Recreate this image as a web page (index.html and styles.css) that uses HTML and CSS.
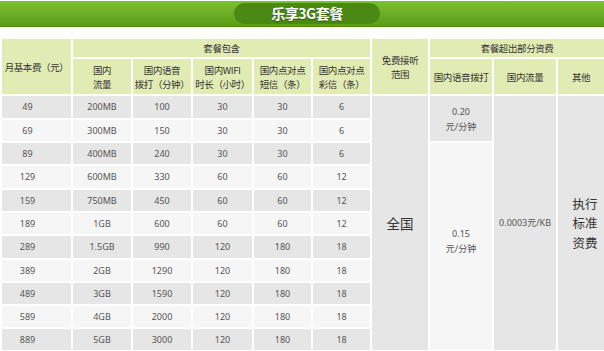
FILE: index.html
```html
<!DOCTYPE html>
<html lang="zh">
<head>
<meta charset="utf-8">
<title>乐享3G套餐</title>
<link rel="stylesheet" href="styles.css">
</head>
<body>
<div class="band">
  <div class="pill">乐享3G套餐</div>
</div>
<table class="plan">
  <colgroup>
    <col class="c1"><col class="c2"><col class="c3"><col class="c4"><col class="c5"><col class="c6"><col class="c7"><col class="c8"><col class="c9"><col class="c10">
  </colgroup>
  <thead>
    <tr class="h1">
      <th rowspan="2">月基本费（元）</th>
      <th colspan="5">套餐包含</th>
      <th rowspan="2" class="free">免费接听<br>范围</th>
      <th colspan="3">套餐超出部分资费</th>
    </tr>
    <tr class="h2">
      <th>国内<br>流量</th>
      <th>国内语音<br>拨打（分钟）</th>
      <th>国内WIFI<br>时长（小时）</th>
      <th>国内点对点<br>短信（条）</th>
      <th>国内点对点<br>彩信（条）</th>
      <th>国内语音拨打</th>
      <th>国内流量</th>
      <th>其他</th>
    </tr>
  </thead>
  <tbody>
    <tr class="dark r24">
      <td class="fee">49</td><td>200MB</td><td>100</td><td>30</td><td>30</td><td>6</td>
      <td rowspan="11" class="big">全国</td>
      <td rowspan="2" class="rate">0.20<br>元/分钟</td>
      <td rowspan="11" class="grey">0.0003元/KB</td>
      <td rowspan="11" class="other">执行<br>标准<br>资费</td>
    </tr>
    <tr class="light">
      <td class="fee">69</td><td>300MB</td><td>150</td><td>30</td><td>30</td><td>6</td>
    </tr>
    <tr class="dark">
      <td class="fee">89</td><td>400MB</td><td>240</td><td>30</td><td>30</td><td>6</td>
      <td rowspan="9" class="rate2">0.15<br>元/分钟</td>
    </tr>
    <tr class="light r24">
      <td class="fee">129</td><td>600MB</td><td>330</td><td>60</td><td>60</td><td>12</td>
    </tr>
    <tr class="dark">
      <td class="fee">159</td><td>750MB</td><td>450</td><td>60</td><td>60</td><td>12</td>
    </tr>
    <tr class="light">
      <td class="fee">189</td><td>1GB</td><td>600</td><td>60</td><td>60</td><td>12</td>
    </tr>
    <tr class="dark r24">
      <td class="fee">289</td><td>1.5GB</td><td>990</td><td>120</td><td>180</td><td>18</td>
    </tr>
    <tr class="light">
      <td class="fee">389</td><td>2GB</td><td>1290</td><td>120</td><td>180</td><td>18</td>
    </tr>
    <tr class="dark">
      <td class="fee">489</td><td>3GB</td><td>1590</td><td>120</td><td>180</td><td>18</td>
    </tr>
    <tr class="light">
      <td class="fee">589</td><td>4GB</td><td>2000</td><td>120</td><td>180</td><td>18</td>
    </tr>
    <tr class="dark">
      <td class="fee">889</td><td>5GB</td><td>3000</td><td>120</td><td>180</td><td>18</td>
    </tr>
  </tbody>
</table>
</body>
</html>
```
FILE: styles.css
```css
html, body {
  margin: 0;
  padding: 0;
  background: #ffffff;
}
body {
  width: 604px;
  height: 351px;
  overflow: hidden;
  font-family: "Noto Sans", "Noto Sans CJK SC", sans-serif;
  color: #444;
}
.band {
  height: 26px;
  margin-top: 1px;
  margin-bottom: 10px;
  background: linear-gradient(#7cc033, #66ab22 60%, #5b9c18);
  border-bottom: 1px solid #4e8c10;
  display: flex;
  justify-content: center;
  align-items: center;
  padding-left: 10px;
  box-sizing: border-box;
}
.pill {
  width: 146px;
  height: 21px;
  border-radius: 11px;
  background: #4a8914;
  color: #ffffff;
  font-family: "Noto Sans CJK SC", sans-serif;
  font-weight: bold;
  font-size: 14px;
  line-height: 21px;
  text-align: center;
  letter-spacing: -0.5px;
  text-shadow: 0 1px 1px rgba(0, 0, 0, 0.35);
}
.plan {
  width: 604px;
  table-layout: fixed;
  border-collapse: collapse;
}
.c1 { width: 71px; }
.c2 { width: 60px; }
.c3 { width: 60px; }
.c4 { width: 61px; }
.c5 { width: 59px; }
.c6 { width: 59px; }
.c7 { width: 58px; }
.c8 { width: 64px; }
.c9 { width: 64px; }
.c10 { width: 48px; }
.plan th, .plan td {
  border: 2px solid #ffffff;
  padding: 0;
  text-align: center;
  vertical-align: middle;
}
.plan th {
  background: #e1ecb4;
  color: #333;
  font-family: "Noto Sans CJK SC", sans-serif;
  font-weight: normal;
  font-size: 9.5px;
  line-height: 14px;
  letter-spacing: -0.4px;
}
.h1 { height: 20px; }
.h2 { height: 37px; }
.plan td {
  font-size: 9px;
  line-height: 12px;
  color: #555;
  height: 21px;
}
.plan tr.r24 td { height: 22px; }
.dark td { background: #e6e6e6; }
.light td { background: #f6f6f6; }
.plan td.fee { padding-right: 18px; }
.plan td.big {
  background: #e6e6e6;
  font-family: "Noto Sans CJK SC", sans-serif;
  font-size: 13.5px;
  color: #333;
}
.plan td.rate {
  background: #e6e6e6;
  line-height: 15px;
}
.plan td.rate2 {
  background: #f6f6f6;
  line-height: 15px;
  padding-bottom: 12px;
}
.plan td.grey {
  background: #e6e6e6;
}
.plan td.other {
  background: #e6e6e6;
  font-family: "Noto Sans CJK SC", sans-serif;
  font-size: 12.5px;
  line-height: 19.5px;
  color: #333;
  padding-left: 8px;
}
```
